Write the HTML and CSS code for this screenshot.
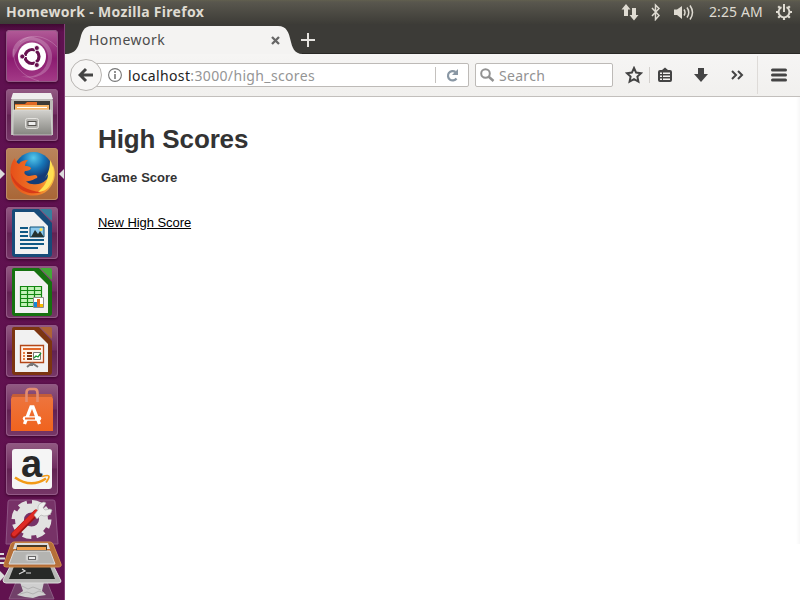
FILE: index.html
```html
<!DOCTYPE html>
<html lang="en">
<head>
<meta charset="utf-8">
<title>Homework</title>
<link rel="stylesheet" href="styles.css">
</head>
<body>
<header class="panel">
  <div class="panel-title">Homework - Mozilla Firefox</div>
  <div class="indicators">
    <svg class="ind-net" width="18" height="18" viewBox="0 0 18 18"><path d="M5 1 9.500 6.500H7V13H3V6.500H.5ZM13 17.500 8.500 12H11V5h4v7h2.500Z"/></svg>
    <svg class="ind-bt" width="10" height="18" viewBox="0 0 10 18"><path d="M1 5l7 7.500-3.500 4V2L8 5.500 1 13" fill="none" stroke="#dfdbd2" stroke-width="1.500"/></svg>
    <svg class="ind-vol" width="21" height="18" viewBox="0 0 21 18"><path d="M0 6.500h3L8 3v13l-5-4H0Z"/><path d="M10 6.500q2 3 0 6M13 4.500q3.500 5 0 10M16 2.500q5 7 0 14" fill="none" stroke="#dfdbd2" stroke-width="1.500"/></svg>
    <span class="clock">2:25 AM</span>
    <svg class="ind-power" width="18" height="18" viewBox="-9 -9 18 18"><g fill="none" stroke="#dfdbd2"><path d="M-2.500-4.800A5.400 5.400 0 1 0 2.500-4.800" stroke-width="1.900"/><path d="M0-8v8" stroke-width="2"/><path d="M5.500 0H8M-5.500 0H-8M0 5.500V8M4 4l1.800 1.800M-4 4l-1.800 1.800M4-4l1.800-1.800M-4-4l-1.800-1.800" stroke-width="2.200"/></g></svg>
  </div>
</header>
<div class="desktop">
  <nav class="launcher">
    <div class="tile dash"><svg viewBox="0 0 52 52"><path d="M7 28C3 15 17 3 31 8c14 4 19 18 12 30-5 8-17 12-28 8 16 3 27-6 27-20C41 12 23 4 13 17Z" fill="#fff" opacity=".22"/><path d="M8 19c-2 17 8 27 25 32M14 12C26 1 43 8 51 17" fill="none" stroke="#fff" stroke-opacity=".2"/><circle cx="26" cy="26.500" r="14" fill="#fff"/><circle cx="26" cy="26.500" r="7" fill="none" stroke="#681250" stroke-width="3.200"/><path d="m26 26.500-12 0m12 0 6-10m-6 10 6 10" stroke="#fff" stroke-width="1.200"/><circle cx="26" cy="26.500" r="5" fill="#fff"/><g fill="#681250" stroke="#fff" stroke-width=".8"><circle cx="16.300" cy="26.500" r="2.500"/><circle cx="30.800" cy="18" r="2.500"/><circle cx="30.800" cy="35" r="2.500"/></g></svg></div>
    <div class="tile"><svg viewBox="0 0 52 52"><defs><linearGradient id="gm" x2="0" y2="1"><stop stop-color="#d2d1cd"/><stop offset="1" stop-color="#858580"/></linearGradient></defs><path d="M7 5h38l2 7v34H5V12Z" fill="#bdbcb8"/><path d="M7 4h38l2 6H5Z" fill="#eeeeec"/><path d="M8 12h36v12H8Z" fill="#3d3a35"/><path d="M9 15h10l2-2h10v3h11v7H9Z" fill="#e16a25"/><path d="M9 16h34v6H9Z" fill="#f8b769"/><path d="M11 18h30v1H11Z" fill="#fff"/><path d="M7 21h38l1 25H7Z" fill="url(#gm)" stroke="#ddd" stroke-width=".7"/><rect x="19.500" y="29.500" width="13" height="10" rx="2" fill="#b4b3af" stroke="#e4e3df"/><rect x="22" y="32.500" width="8" height="4" fill="#eee" stroke="#55534e"/></svg></div>
    <div class="tile firefox"><svg viewBox="0 0 52 52"><defs><radialGradient id="blue" cx=".5" cy=".15"><stop stop-color="#55c8ec"/><stop offset=".55" stop-color="#1675b7"/><stop offset="1" stop-color="#153c77"/></radialGradient><linearGradient id="fox" x1="0" x2="1"><stop stop-color="#e65019"/><stop offset=".65" stop-color="#f07a28"/><stop offset="1" stop-color="#fbc244"/></linearGradient></defs><circle cx="27.500" cy="23.500" r="19.500" fill="url(#blue)"/><path d="M9 10C3 17 3 29 8 37c7 12 25 14 34 5 6-6 9-16 5-25 0 7-3 12-7 15-4 4-9 5-14 4-3 0-5-2-6-3 4 1 8-2 11-3 1-1 0-3-2-3-3 0-6 2-9 0-2-1-2-3-1-4 3 0 6-1 6-3-2-2-4-2-6-2 0-2 1-4 3-6-4 0-7 1-9 4-2-1-4-3-4-6Z" fill="url(#fox)"/><path d="M44 12c5 8 5 18 0 25-3 5-8 7-12 7 6-5 10-11 10-18l-3 4c4-6 5-11 5-18Z" fill="#ffe152"/><path d="M5 25c1 14 17 24 30 19-13-1-25-7-30-19Z" fill="#d73b18"/></svg></div>
    <div class="tile"><svg viewBox="0 0 52 52"><path d="M8 2h25l13 14v31q0 3-3 3H9q-3 0-3-3V4q0-2 2-2Z" fill="#174b79"/><path d="M9 5h19l14 14v28H9Z" fill="#f1f1f1"/><path d="M34 2h10q2 0 2 2v10Z" fill="#377f9d"/><path d="M14 21h8m-8 4h8m-8 4h8m-8 4h24m-24 4h24m-24 4h18" stroke="#105985" stroke-width="2"/><path d="M24 20h14v10H24Z" fill="#8cc9ec" stroke="#0d527b"/><path d="m25 30 4-7 3 4 2-3 4 6Z" fill="#26332f"/><circle cx="35" cy="22.500" r="1.500" fill="#ffe24c"/></svg></div>
    <div class="tile"><svg viewBox="0 0 52 52"><path d="M8 2h25l13 14v31q0 3-3 3H9q-3 0-3-3V4q0-2 2-2Z" fill="#167110"/><path d="M9 5h19l14 14v28H9Z" fill="#f1f1f1"/><path d="M34 2h10q2 0 2 2v10Z" fill="#43a737"/><path d="M14 20h22v21H14Z" fill="#c3f2b7"/><path d="M14.500 20.500h21v20h-21zm0 4h21m-21 4h21m-21 4h21m-21 4h21m-14-16v20m7-20v20" fill="none" stroke="#138711" stroke-width="1.200"/><path d="M27.500 31.500h10v10h-10Z" fill="#fff" stroke="#8a8a8a"/><path d="M28 36h3v5h-3Z" fill="#1387d8"/><path d="M31 33h3v8h-3Z" fill="#e66b1b"/><path d="M34 38h3v3h-3Z" fill="#f5bd00"/></svg></div>
    <div class="tile"><svg viewBox="0 0 52 52"><path d="M8 2h25l13 14v31q0 3-3 3H9q-3 0-3-3V4q0-2 2-2Z" fill="#7c3511"/><path d="M9 5h19l14 14v28H9Z" fill="#f1f1f1"/><path d="M34 2h10q2 0 2 2v10Z" fill="#ae6335"/><path d="M14.500 20.500h23v17h-23Z" fill="#fff3e9" stroke="#b44718" stroke-width="1.300"/><path d="M17 24h18" stroke="#e1682a" stroke-width="2"/><path d="M17 28h2m-2 3h2m-2 3h2" stroke="#e87c42" stroke-width="2"/><path d="M21 28h5m-5 3h5m-5 3h5" stroke="#823310" stroke-width="2"/><path d="M27.500 27.500h7v7h-7Z" fill="#fff" stroke="#777"/><path d="m28 33 2-2 2 1 3-4" fill="none" stroke="#169531" stroke-width="1.300"/><path d="m26 38-5 4m5-4 6 4m-6-4v3" stroke="#777" stroke-width="2"/></svg></div>
    <div class="tile"><svg viewBox="0 0 52 52"><defs><linearGradient id="bag" x2="0" y2="1"><stop stop-color="#ed7640"/><stop offset="1" stop-color="#f0631e"/></linearGradient></defs><path d="M7 10h38l2 5v32H5V15Z" fill="url(#bag)"/><path d="M7 10h38l2 3H5Z" fill="#c45d38"/><path d="M20.500 18V9q0-4 3-4h5q3 0 3 4v9" fill="none" stroke="#e38c70" stroke-width="2.600"/><path d="m18.500 40 6.500-17h2l6.500 17" fill="none" stroke="#fff" stroke-width="3.300"/><path d="M19 34.500h14" stroke="#fff" stroke-width="4.500" stroke-linecap="round"/><path d="M19 34.500h10" stroke="#ee6a2b" stroke-width="2"/></svg></div>
    <div class="tile"><svg viewBox="0 0 52 52"><rect x="6" y="6" width="40" height="40" rx="3" fill="#f5f5f5"/><text x="15" y="34" class="amazon-letter">a</text><path d="M9 34.500q16 11 31 1" fill="none" stroke="#f29a16" stroke-width="2.600"/><path d="M36 33.500q7-2 7 0t-3 6" fill="none" stroke="#f29a16" stroke-width="1.700"/></svg></div>
    <svg class="folded" width="64" height="103" viewBox="0 0 64 103"><path d="M10 3h43q2 0 2 2l3 42H6L8 5Q8 3 10 3Z" fill="#773267" stroke="#8e5484"/><g fill="none" stroke="#e2e2e1"><ellipse cx="31.500" cy="22.500" rx="12" ry="11.500" stroke-width="9"/><ellipse cx="31.500" cy="22.500" rx="17.500" ry="17" stroke-width="5" stroke-dasharray="8.500 5.050"/></g><path d="m14 38 22-22" stroke="#9d1515" stroke-width="6.500" stroke-linecap="round"/><path d="m14 37 22-22" stroke="#df2b25" stroke-width="4.500" stroke-linecap="round"/><path d="m34 18 4-5q-1-7 6-8l2 1-3 5 2 2 5-1 2 1q-1 6-8 6l-3-1-4 4Z" fill="#eeeeec" stroke="#aaa" stroke-width=".6"/><path d="M16 85h31l7 17H9Z" fill="#714069" stroke="#8c5c85"/><path d="M20 85h24l-2 9 4 4-7 1-6 2-8-1-8-2 6-4Z" fill="#cfcfcf"/><path d="m22 89 6 3 5-2 8 3M20 97l7-2 6 2 6-3 5 2" fill="none" stroke="#b2b2b2"/><path d="M13 64h38l10 20q0 2-3 2H6q-3 0-3-3Z" fill="#b8b8b6" stroke="#ddd"/><path d="M15 67h34l6 15H9Z" fill="#272927"/><path d="m19 77 6-3-3-2m4 4h5" stroke="#ddd" stroke-width="1.200" fill="none"/><path d="M14 45h36q2 0 3 2l8 20q1 3-3 3H6q-3 0-2-3l7-20q1-2 3-2Z" fill="#b66f38" stroke="#d08c4c"/><path d="M15 46h33l2 6H13Z" fill="#ddd"/><path d="M17 48h30v6H16Z" fill="#493926"/><path d="M17 50h29v3H17Z" fill="#f3a04b"/><path d="M14 54h36l5 13H9Z" fill="#b4b4b1" stroke="#ddd"/><rect x="25.500" y="57" width="13" height="7" rx="2" fill="#d4d4d1" stroke="#bbb"/><rect x="28.500" y="59.500" width="7" height="3" fill="#eee" stroke="#666"/><path d="M0 57h4M0 61.500h5M0 66h4" stroke="#ddd" stroke-width="2"/><path d="m0 74 5 5-5 5Z" fill="#ddd"/></svg>
  </nav>
  <main class="browser">
    <div class="tabs">
      <div class="tab"><svg class="tab-shape" width="238" height="30" viewBox="0 0 238 30"><path d="M0 30C22 30 9 2 27 2h186c18 0 7 28 25 28Z" fill="#f4f3f2"/></svg><span class="tab-title">Homework</span><svg class="tab-close" width="9" height="9" viewBox="0 0 9 9"><path d="m1 1 7 7m0-7-7 7" stroke="#666" stroke-width="2.300"/></svg></div>
      <svg class="new-tab" width="16" height="16" viewBox="0 0 16 16"><path d="M8 1v14M1 8h14" stroke="#e5e3df" stroke-width="2"/></svg>
    </div>
    <div class="toolbar">
      <div class="back"><svg width="16" height="16" viewBox="0 0 16 16"><path d="M15 8H3m5-6L2 8l6 6" fill="none" stroke="#444" stroke-width="3"/></svg></div>
      <div class="address"><svg class="info" width="14" height="14" viewBox="0 0 14 14"><circle cx="7" cy="7" r="6.400" fill="none" stroke="#777" stroke-width="1.100"/><path d="M7 6v5M7 3v2" stroke="#777" stroke-width="1.600"/></svg><span class="url"><b>localhost</b>:3000/high_scores</span><div class="reload"><svg width="13" height="13" viewBox="0 0 13 13"><path d="M10.500 9.500A4.700 4.700 0 1 1 9.500 3" fill="none" stroke="#8997a4" stroke-width="2.200"/><path d="M12 0v6H6Z" fill="#8997a4"/></svg></div></div>
      <div class="search"><svg width="15" height="15" viewBox="0 0 15 15"><circle cx="5.500" cy="5.500" r="4.300" fill="none" stroke="#929292" stroke-width="2"/><path d="m8.500 8.500 5 4.500" stroke="#929292" stroke-width="2.500"/></svg><span>Search</span></div>
      <svg class="star" width="18" height="18" viewBox="0 0 18 18"><path d="m9 2 2.100 4.600 5 .6-3.700 3.400 1 5L9 13.100l-4.400 2.500 1-5L1.900 7.200l5-.6Z" fill="none" stroke="#444" stroke-width="2"/></svg>
      <i class="rule"></i>
      <svg class="clip" width="16" height="16" viewBox="0 0 16 16"><path d="M3 3h2l3-2.500L11 3h2q2 0 2 2v8q0 2-2 2H3q-2 0-2-2V5q0-2 2-2Z" fill="#444"/><path d="M3 5.500h2V7H3zm3 0h7V7H6zM3 8.500h2V10H3zm3 0h7V10H6zM3 11.500h2V13H3zm3 0h7V13H6z" fill="#f4f3f2"/></svg>
      <svg class="download" width="14" height="15" viewBox="0 0 14 15"><path d="M4 0h6v6h4l-7 8-7-8h4Z" fill="#444"/></svg>
      <svg class="more" width="13" height="10" viewBox="0 0 13 10"><path d="m1 1 4 4-4 4m6-8 4 4-4 4" fill="none" stroke="#444" stroke-width="2"/></svg>
      <div class="menu"><svg width="16" height="14" viewBox="0 0 16 14"><path d="M1.500 2h13m-13 5h13m-13 5h13" stroke="#444" stroke-width="3" stroke-linecap="round"/></svg></div>
    </div>
    <article class="page">
      <h1>High Scores</h1>
      <table><thead><tr><th>Game</th><th>Score</th></tr></thead></table>
      <a href="#">New High Score</a>
    </article>
  </main>
</div>
</body>
</html>
```
FILE: styles.css
```css
* { box-sizing: border-box; }
body { margin: 0; width: 800px; height: 600px; overflow: hidden; background: #fff; font-family: "Noto Sans", sans-serif; }
svg { display: block; flex: none; }
.panel { height: 24px; display: flex; align-items: center; justify-content: space-between; padding: 0 7px 0 6px; background: linear-gradient(#62604f 0, #59574e 2px, #3d3c37 24px); color: #dfdbd2; }
.panel-title { font-size: 14px; font-weight: 700; letter-spacing: .31px; white-space: nowrap; line-height: 22px; }
.indicators { display: flex; align-items: center; fill: #dfdbd2; }
.ind-net { position: relative; left: 1px; }
.ind-bt { margin-left: 13px; }
.ind-vol { margin-left: 13px; }
.clock { width: 54px; margin-left: 14px; font-size: 14px; letter-spacing: .1px; white-space: nowrap; line-height: 22px; }
.ind-power { margin-left: 12px; }
.desktop { display: flex; height: 576px; }
.launcher { position: relative; width: 65px; flex: none; padding: 6px 0 0 6px; display: flex; flex-direction: column; gap: 7px; background: linear-gradient(#400832 0, #5f1150 8px, #61124f 100%); border-right: 1px solid #844078; }
.tile { position: relative; width: 52px; height: 52px; flex: none; border-radius: 4px; background: linear-gradient(#925b82, #702c60 48%, #622252 50%, #773768); box-shadow: inset 0 0 0 1px #935986, 0 1px 3px #380429; }
.tile svg { width: 52px; height: 52px; }
.dash { background: linear-gradient(#b25c98, #8b1b70 55%, #a53b88); }
.firefox { background: linear-gradient(#b9845c, #a96636); box-shadow: inset 0 0 0 1px #bd8c66, 0 1px 3px #380429; }
.firefox::before, .firefox::after { content: ""; position: absolute; top: 21px; border: 5px solid transparent; }
.firefox::before { left: -6px; border-left-color: #ddd; border-right: 0; }
.firefox::after { right: -6px; border-right-color: #ddd; border-left: 0; }
.amazon-letter { font: bold 38px "Liberation Sans", Arial, sans-serif; fill: #282828; }
.folded { position: absolute; left: 0; bottom: 0; }
.browser { flex: 1; min-width: 0; }
.tabs { height: 30px; display: flex; background: #3c3b37; border-bottom: 1px solid #292825; }
.tab { width: 238px; height: 30px; position: relative; display: flex; align-items: center; padding: 0 23px 0 24px; justify-content: space-between; }
.tab-shape { position: absolute; left: 0; top: 0; }
.tab-title { position: relative; font-size: 14px; letter-spacing: .5px; color: #4c4c4c; }
.tab-close { position: relative; top: 1px; }
.new-tab { margin: 8px 0 0 -3px; }
.toolbar { height: 43px; display: flex; align-items: center; background: linear-gradient(#f6f5f4, #f1f0ee); border-bottom: 1px solid #c2bfbc; padding-left: 5px; }
.back { width: 32px; height: 32px; flex: none; border: 1px solid #b8b5b2; border-radius: 50%; background: #f7f6f5; display: flex; align-items: center; justify-content: center; z-index: 1; }
.address { width: 374px; height: 24px; margin-left: -7px; border: 1px solid #bdbab7; border-radius: 2px; background: #fff; display: flex; align-items: center; padding-left: 12px; }
.url { width: 190px; margin-left: 6px; font-size: 14px; letter-spacing: .35px; color: #959595; white-space: nowrap; }
.url b { font-weight: 400; color: #222; }
.reload { width: 33px; height: 16px; margin-left: auto; border-left: 1px solid #c4c1be; display: flex; align-items: center; justify-content: center; }
.search { width: 138px; height: 24px; margin-left: 6px; border: 1px solid #bdbab7; border-radius: 2px; background: #fff; display: flex; align-items: center; gap: 4px; padding-left: 4px; font-size: 14px; letter-spacing: .3px; color: #929292; }
.star { margin-left: 12px; }
.rule { width: 1px; height: 16px; margin-left: 6px; background: #d2cfcc; }
.clip { margin-left: 7px; }
.download { margin-left: 21px; }
.more { margin-left: 23px; }
.menu { width: 43px; height: 38px; margin-left: auto; border-left: 1px solid #dedbd8; display: flex; align-items: center; justify-content: center; }
.page { padding: 28px 33px; height: 503px; font: 13px/18px "Liberation Sans", Arial, sans-serif; color: #333; background: linear-gradient(to right, transparent 731px, #f7f7f7) no-repeat 0 0 / 100% 447px; }
h1 { margin: 0; font-size: 26px; line-height: 29px; letter-spacing: -.13px; }
table { margin: 12px 0 24px; border-spacing: 2px; line-height: 18px; }
th { padding: 1px; font-weight: 700; }
a { color: #000; text-decoration: underline; letter-spacing: -.06px; }
```
